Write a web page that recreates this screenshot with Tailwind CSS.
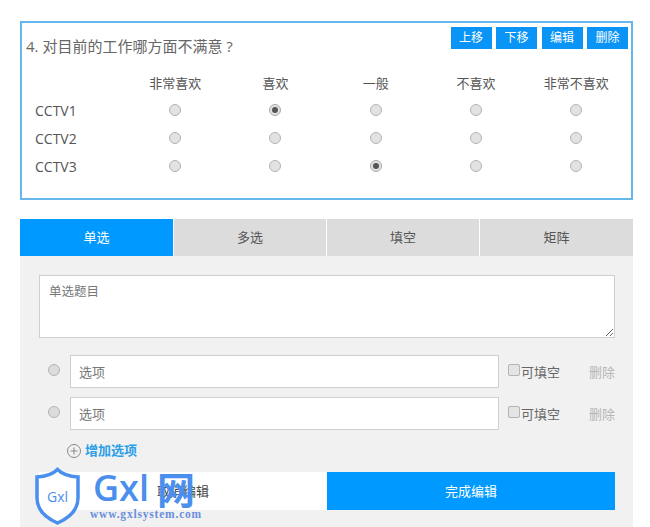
<!DOCTYPE html>
<html lang="zh-CN">
<head>
    <meta charset="UTF-8">
    <meta name="viewport" content="width=device-width, initial-scale=1.0">
    <title>问卷编辑</title>
    <script src="https://cdn.jsdelivr.net/npm/@tailwindcss/browser@4"></script>
</head>
<body class="relative h-[527px] overflow-hidden bg-white font-['Open_Sans','Noto_Sans_CJK_SC',sans-serif]">
    <div class="ml-5 w-[613px] pt-[21px]">
        <!-- 题目预览 -->
        <div class="h-[179px] border-2 border-[#66b7ec] pl-1 pr-[3px] pt-1">
            <div class="flex items-start justify-between">
                <h2 class="mt-[9px] text-[15px] leading-5 text-[#666]">4. 对目前的工作哪方面不满意 ?</h2>
                <div class="flex gap-[4.5px]">
                    <button class="h-[22px] w-[41px] bg-[#0a94f5] text-xs text-white">上移</button>
                    <button class="h-[22px] w-[41px] bg-[#0a94f5] text-xs text-white">下移</button>
                    <button class="h-[22px] w-[41px] bg-[#0a94f5] text-xs text-white">编辑</button>
                    <button class="h-[22px] w-[41px] bg-[#0a94f5] text-xs text-white">删除</button>
                </div>
            </div>
            <div class="mt-[13px] grid grid-cols-[99px_repeat(5,100.3px)] items-center text-center text-[13px] text-[#555] [&>span]:-mt-0.5">
                <div class="h-7"></div>
                <div class="leading-7">非常喜欢</div>
                <div class="leading-7">喜欢</div>
                <div class="leading-7">一般</div>
                <div class="leading-7">不喜欢</div>
                <div class="leading-7">非常不喜欢</div>

                <div class="pl-[9px] text-left text-sm leading-7">CCTV1</div>
                <span class="mx-auto size-3 rounded-full border border-[#b4b4b4] bg-[#e2e2e2]"></span>
                <span class="mx-auto flex size-3 items-center justify-center rounded-full border border-[#aaa] bg-[#e2e2e2]"><span class="size-1.5 rounded-full bg-[#555]"></span></span>
                <span class="mx-auto size-3 rounded-full border border-[#b4b4b4] bg-[#e2e2e2]"></span>
                <span class="mx-auto size-3 rounded-full border border-[#b4b4b4] bg-[#e2e2e2]"></span>
                <span class="mx-auto size-3 rounded-full border border-[#b4b4b4] bg-[#e2e2e2]"></span>

                <div class="pl-[9px] text-left text-sm leading-7">CCTV2</div>
                <span class="mx-auto size-3 rounded-full border border-[#b4b4b4] bg-[#e2e2e2]"></span>
                <span class="mx-auto size-3 rounded-full border border-[#b4b4b4] bg-[#e2e2e2]"></span>
                <span class="mx-auto size-3 rounded-full border border-[#b4b4b4] bg-[#e2e2e2]"></span>
                <span class="mx-auto size-3 rounded-full border border-[#b4b4b4] bg-[#e2e2e2]"></span>
                <span class="mx-auto size-3 rounded-full border border-[#b4b4b4] bg-[#e2e2e2]"></span>

                <div class="pl-[9px] text-left text-sm leading-7">CCTV3</div>
                <span class="mx-auto size-3 rounded-full border border-[#b4b4b4] bg-[#e2e2e2]"></span>
                <span class="mx-auto size-3 rounded-full border border-[#b4b4b4] bg-[#e2e2e2]"></span>
                <span class="mx-auto flex size-3 items-center justify-center rounded-full border border-[#aaa] bg-[#e2e2e2]"><span class="size-1.5 rounded-full bg-[#555]"></span></span>
                <span class="mx-auto size-3 rounded-full border border-[#b4b4b4] bg-[#e2e2e2]"></span>
                <span class="mx-auto size-3 rounded-full border border-[#b4b4b4] bg-[#e2e2e2]"></span>
            </div>
        </div>

        <!-- 题型切换 -->
        <div class="mt-[19px] grid h-[37px] grid-cols-[153px_152px_152px_153px] gap-px text-[13px] leading-[37px] text-center text-[#555]">
            <div class="bg-[#0099ff] text-white">单选</div>
            <div class="bg-[#dcdcdc]">多选</div>
            <div class="bg-[#dcdcdc]">填空</div>
            <div class="bg-[#dcdcdc]">矩阵</div>
        </div>

        <!-- 编辑区 -->
        <div class="h-[280px] bg-[#f1f1f1] pl-[19px] pr-[18px] pt-[19px]">
            <textarea class="block h-[63px] w-[576px] border border-[#cfcfcf] bg-white px-[9px] py-[7px] text-[12.500px] leading-[18px] text-[#777] outline-none">单选题目</textarea>

            <div class="mt-[17px] flex h-[33px] items-center text-[13px]">
                <span class="-mt-[3px] ml-[9px] mr-[10px] size-3 rounded-full border border-[#b4b4b4] bg-[#dcdcdc]"></span>
                <div class="flex h-[33px] w-[429px] items-center border border-[#cfcfcf] bg-white pl-2 pt-0.5 text-[#777]">选项</div>
                <span class="-mt-[3px] ml-[9px] size-3 rounded-[2px] border border-[#b4b4b4] bg-[#e4e4e4]"></span>
                <span class="ml-px pt-0.5 text-[#666]">可填空</span>
                <span class="ml-auto pt-0.5 text-[13px] text-[#b5b5b5]">删除</span>
            </div>
            <div class="mt-[9px] flex h-[33px] items-center text-[13px]">
                <span class="-mt-[3px] ml-[9px] mr-[10px] size-3 rounded-full border border-[#b4b4b4] bg-[#dcdcdc]"></span>
                <div class="flex h-[33px] w-[429px] items-center border border-[#cfcfcf] bg-white pl-2 pt-0.5 text-[#777]">选项</div>
                <span class="-mt-[3px] ml-[9px] size-3 rounded-[2px] border border-[#b4b4b4] bg-[#e4e4e4]"></span>
                <span class="ml-px pt-0.5 text-[#666]">可填空</span>
                <span class="ml-auto pt-0.5 text-[13px] text-[#b5b5b5]">删除</span>
            </div>

            <div class="ml-7 mt-[11px] flex h-5 items-center gap-1 text-[13px] font-bold text-[#2a9fe8]">
                <svg class="size-[14px]" viewBox="0 0 14 14" fill="none" stroke="#888" stroke-width="1"><circle cx="7" cy="7" r="6.500"/><path d="M3.500 7h7M7 3.500v7"/></svg>
                <span>增加选项</span>
            </div>

            <div class="mt-[11px] flex h-[38px] text-[13px] leading-[38px] text-center">
                <button class="w-[288px] bg-white text-[#444]">取消编辑</button>
                <button class="w-[288px] bg-[#0099ff] text-white">完成编辑</button>
            </div>
        </div>
    </div>

    <!-- 水印 -->
    <div class="absolute left-[35px] top-[467px] h-[60px] w-[170px] text-[#4a8fee]">
        <svg class="absolute left-0 top-0 h-[58px] w-[45px]" viewBox="0 0 45 58" fill="#ffffff" stroke="#4a8fee" stroke-width="3.500"><path d="M22.500 2.500C27 7 34 9.500 43 10v21c0 12-9 20-20.500 25C11 51 2 43 2 31V10c9-.5 16-3 20.500-7.500z"/></svg>
        <span class="absolute left-[12px] top-[20px] text-sm leading-5">Gxl</span>
        <span class="absolute left-[58px] top-[-1px] font-['Open_Sans',sans-serif] text-[36px] leading-[44px] font-semibold">Gxl</span>
        <span class="absolute left-[122px] top-0 font-['Noto_Sans_CJK_SC',sans-serif] text-[38px] leading-[42px] font-bold">网</span>
        <span class="absolute left-[55px] top-[41px] font-['Liberation_Serif',serif] text-[11.500px] leading-3 font-bold tracking-[0.8px] text-[#6a8fdc]">www.gxlsystem.com</span>
    </div>
</body>
</html>
